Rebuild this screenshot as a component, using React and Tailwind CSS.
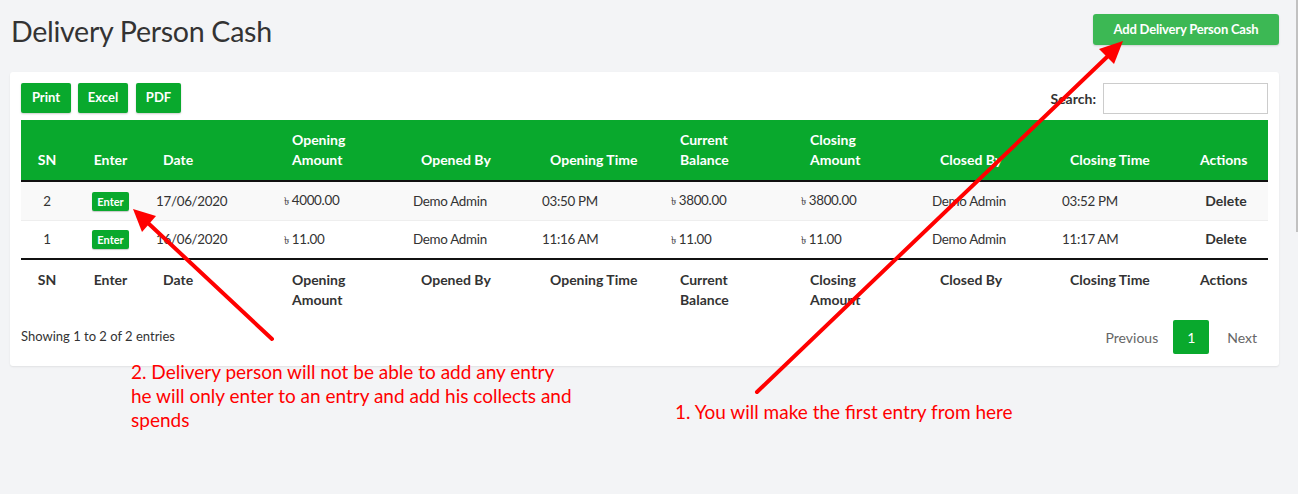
import React from "react";

const font = { fontFamily: "Lato, 'Open Sans', sans-serif" };

const rows = [
  { sn: 2, date: "17/06/2020", open: "4000.00", by: "Demo Admin", otime: "03:50 PM", cur: "3800.00", close: "3800.00", cby: "Demo Admin", ctime: "03:52 PM" },
  { sn: 1, date: "16/06/2020", open: "11.00", by: "Demo Admin", otime: "11:16 AM", cur: "11.00", close: "11.00", cby: "Demo Admin", ctime: "11:17 AM" },
];

const Head = ({ dark }) => {
  const cls = dark
    ? "text-white align-bottom pt-[10px] pb-[10px]"
    : "text-[#333] align-top pt-[10px] pb-[10px]";
  return (
    <tr className={dark ? "bg-[#09a92d] border-b-2 border-[#111]" : "border-t-2 border-[#111]"}>
      <th className={`${cls} text-center`}>SN</th>
      <th className={`${cls} text-center`}>Enter</th>
      <th className={`${cls} text-left pl-[15px]`}>Date</th>
      <th className={`${cls} text-left pl-[16px]`}>Opening<br />Amount</th>
      <th className={`${cls} text-left pl-[16px]`}>Opened By</th>
      <th className={`${cls} text-left pl-[16px]`}>Opening Time</th>
      <th className={`${cls} text-left pl-[17px]`}>Current<br />Balance</th>
      <th className={`${cls} text-left pl-[17px]`}>Closing<br />Amount</th>
      <th className={`${cls} text-left pl-[16px]`}>Closed By</th>
      <th className={`${cls} text-left pl-[16px]`}>Closing Time</th>
      <th className={`${cls} text-left pl-[16px]`}>Actions</th>
    </tr>
  );
};

const Taka = ({ v }) => (
  <span>
    <span className="text-[11px] mr-[3px]">৳</span>
    {v}
  </span>
);

export default function App() {
  return (
    <div className="relative w-[1298px] h-[494px] bg-[#f3f4f6] flex overflow-hidden text-[14px] text-[#333]" style={font}>
      <div className="w-[1294px] pl-[10px] pr-[15px]">
        {/* page header */}
        <div className="flex justify-between items-start pt-[14px]">
          <h1 className="text-[28.6px] leading-[34px] text-[#333] pl-[1px] tracking-[-0.3px]">Delivery Person Cash</h1>
          <button className="h-[31px] w-[186px] bg-[#3cb854] text-white text-[13px] font-bold rounded-[3px] shadow-[0_1px_2px_rgba(0,0,0,0.15)] tracking-[-0.2px]">
            Add Delivery Person Cash
          </button>
        </div>

        {/* card */}
        <div className="mt-[24px] bg-white rounded-[3px] shadow-[0_1px_2px_rgba(0,0,0,0.08)] p-[11px] h-[294px]">
          <div className="flex justify-between items-center h-[30px]">
            <div className="flex gap-[7px]">
              <button className="w-[50px] h-[30px] bg-[#09a92d] text-white text-[13px] font-bold rounded-[2px] shadow-[0_1px_2px_rgba(0,0,0,0.2)]">Print</button>
              <button className="w-[50px] h-[30px] bg-[#09a92d] text-white text-[13px] font-bold rounded-[2px] shadow-[0_1px_2px_rgba(0,0,0,0.2)]">Excel</button>
              <button className="ml-[1px] w-[45px] h-[30px] bg-[#09a92d] text-white text-[13px] font-bold rounded-[2px] shadow-[0_1px_2px_rgba(0,0,0,0.2)]">PDF</button>
            </div>
            <div className="flex items-center gap-[7px]">
              <span className="font-bold text-[#333]">Search:</span>
              <div className="w-[165px] h-[31px] border border-[#ccc] bg-white"></div>
            </div>
          </div>

          <table className="mt-[7px] w-[1247px] table-fixed border-collapse">
            <colgroup>
              <col className="w-[52px]" />
              <col className="w-[75px]" />
              <col className="w-[128px]" />
              <col className="w-[129px]" />
              <col className="w-[129px]" />
              <col className="w-[129px]" />
              <col className="w-[130px]" />
              <col className="w-[131px]" />
              <col className="w-[130px]" />
              <col className="w-[130px]" />
              <col className="w-[84px]" />
            </colgroup>
            <thead className="font-bold leading-[20px]">
              <Head dark />
            </thead>
            <tbody className="leading-[20px] text-[13.4px] tracking-[-0.3px]">
              {rows.map((r, i) => (
                <tr key={r.sn} className={i === 0 ? "bg-[#f9f9f9] h-[39px]" : "bg-white h-[39px] border-t border-[#eee]"}>
                  <td className="text-center">{r.sn}</td>
                  <td className="text-center">
                    <span className="inline-block bg-[#09a92d] text-white text-[11px] font-bold leading-[19px] px-[5px] rounded-[2px] tracking-normal shadow-[0_1px_1px_rgba(0,0,0,0.2)]">Enter</span>
                  </td>
                  <td className="pl-[8px]">{r.date}</td>
                  <td className="pl-[8px]"><Taka v={r.open} /></td>
                  <td className="pl-[8px]">{r.by}</td>
                  <td className="pl-[8px]">{r.otime}</td>
                  <td className="pl-[8px]"><Taka v={r.cur} /></td>
                  <td className="pl-[8px]"><Taka v={r.close} /></td>
                  <td className="pl-[8px]">{r.cby}</td>
                  <td className="pl-[8px]">{r.ctime}</td>
                  <td className="text-center font-bold text-[14px] tracking-normal">Delete</td>
                </tr>
              ))}
            </tbody>
            <tfoot className="font-bold leading-[20px]">
              <Head />
            </tfoot>
          </table>

          <div className="flex justify-between items-center">
            <span className="text-[13px] text-[#333]">Showing 1 to 2 of 2 entries</span>
            <div className="flex items-center text-[#666] pr-[11px]">
              <span>Previous</span>
              <span className="ml-[15px] w-[36px] h-[34px] bg-[#09a92d] text-white rounded-[2px] flex items-center justify-center">1</span>
              <span className="ml-[18px]">Next</span>
            </div>
          </div>
        </div>
      </div>

      {/* scrollbar */}
      <div className="w-[4px] flex">
        <div className="w-[2px]"></div>
        <div className="w-[2px] h-[232px] bg-[#c1c1c1]"></div>
      </div>

      {/* annotations */}
      <div className="absolute left-[131px] top-[360px] text-[19px] leading-[24px] text-[#ff0000]">
        2. Delivery person will not be able to add any entry
        <br />
        he will only enter to an entry and add his collects and
        <br />
        spends
      </div>
      <div className="absolute left-[675px] top-[400px] text-[19px] leading-[24px] text-[#ff0000]">
        1. You will make the first entry from here
      </div>
      <svg className="absolute left-0 top-0 pointer-events-none" width="1298" height="494">
        <line x1="757" y1="392" x2="1108" y2="56" stroke="#ff0000" strokeWidth="4" strokeLinecap="round" />
        <polygon points="1123,41 1114,64 1099,49" fill="#ff0000" />
        <line x1="272" y1="339" x2="148" y2="223" stroke="#ff0000" strokeWidth="4" strokeLinecap="round" />
        <polygon points="133,209 156,216 142,232" fill="#ff0000" />
      </svg>
    </div>
  );
}
